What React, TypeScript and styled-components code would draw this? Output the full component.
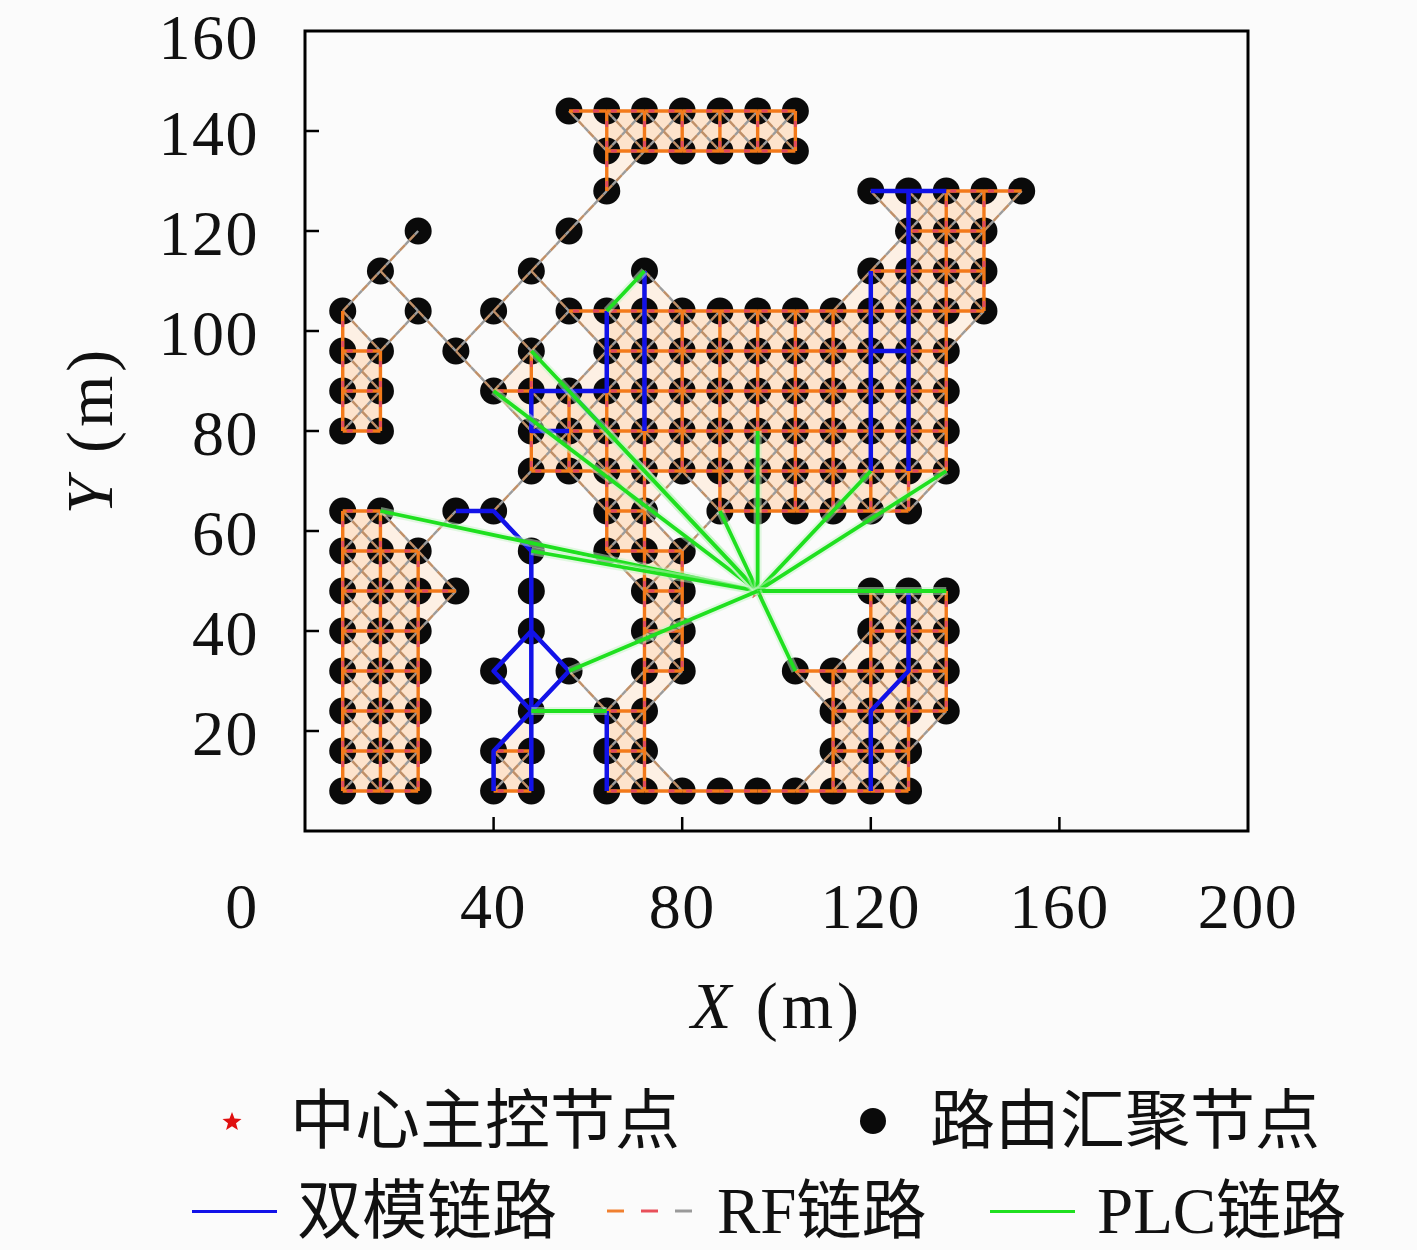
import React from "react";
import styled, { createGlobalStyle } from "styled-components";

const GlobalStyle = createGlobalStyle`
  html, body {
    margin: 0;
    padding: 0;
    background: #fbfbfb;
    overflow: hidden;
  }
`;

// plot box in page pixels
const X0 = 305;
const X1 = 1248;
const Y0 = 831;
const Y1 = 31;
const sx = (x: number) => X0 + (x * (X1 - X0)) / 200;
const sy = (y: number) => Y0 - (y * (Y0 - Y1)) / 160;

const range = (a: number, b: number) =>
  Array.from({ length: b - a + 1 }, (_, k) => a + k);

// node grid: key j (y = 8j) -> list of i (x = 8i)
const ROWS: Record<number, number[]> = {
  18: range(7, 13),
  17: range(8, 13),
  16: [8, ...range(15, 19)],
  15: [3, 7, 16, 17, 18],
  14: [2, 6, 9, ...range(15, 18)],
  13: [1, 3, 5, ...range(7, 18)],
  12: [1, 2, 4, 6, ...range(8, 17)],
  11: [1, 2, ...range(5, 17)],
  10: [1, 2, ...range(6, 17)],
  9: range(6, 17),
  8: [1, 2, 4, 5, 8, 9, ...range(11, 16)],
  7: [1, 2, 3, 6, 8, 9, 10],
  6: [1, 2, 3, 4, 6, 9, 10, 15, 16, 17],
  5: [1, 2, 3, 6, 9, 10, 15, 16, 17],
  4: [1, 2, 3, 5, 7, 9, 10, ...range(13, 17)],
  3: [1, 2, 3, 6, 8, 9, ...range(14, 17)],
  2: [1, 2, 3, 5, 6, 8, 9, 14, 15, 16],
  1: [1, 2, 3, 5, 6, ...range(8, 16)],
};

type Pt = [number, number];

const NODES: Pt[] = [];
Object.entries(ROWS).forEach(([j, list]) =>
  list.forEach((i) => NODES.push([i, Number(j)]))
);
const has = new Set(NODES.map(([i, j]) => `${i},${j}`));
const on = (i: number, j: number) => has.has(`${i},${j}`);

const ORTHO: [Pt, Pt][] = [];
const DIAG: [Pt, Pt][] = [];
const CELLS: { pts: Pt[]; full: boolean }[] = [];
NODES.forEach(([i, j]) => {
  if (on(i + 1, j)) ORTHO.push([[i, j], [i + 1, j]]);
  if (on(i, j + 1)) ORTHO.push([[i, j], [i, j + 1]]);
  if (on(i + 1, j + 1)) DIAG.push([[i, j], [i + 1, j + 1]]);
  if (on(i + 1, j - 1)) DIAG.push([[i, j], [i + 1, j - 1]]);
});
for (let i = 0; i < 20; i++) {
  for (let j = 0; j < 19; j++) {
    const c: Pt[] = ([[i, j], [i + 1, j], [i + 1, j + 1], [i, j + 1]] as Pt[]).filter(
      ([a, b]) => on(a, b)
    );
    if (c.length >= 3) CELLS.push({ pts: c, full: c.length === 4 });
  }
}

// metres
const BLUE: Pt[][] = [
  [[32, 64], [40, 64], [48, 56], [48, 24], [56, 32], [48, 40], [40, 32], [48, 24], [40, 16], [40, 8]],
  [[48, 24], [48, 8]],
  [[64, 24], [64, 8]],
  [[72, 112], [72, 80]],
  [[64, 104], [64, 88], [48, 88], [48, 80], [56, 80]],
  [[56, 88], [64, 80]],
  [[120, 128], [136, 128]],
  [[128, 128], [128, 72]],
  [[120, 112], [120, 72]],
  [[120, 96], [128, 96]],
  [[128, 48], [128, 32], [120, 24], [120, 8]],
];

const HUB: Pt = [96, 48];
const PLC: [Pt, Pt][] = [
  ...([
    [16, 64], [48, 56], [40, 88], [48, 96], [64, 80], [72, 72], [88, 64],
    [96, 80], [120, 72], [136, 72], [136, 48], [104, 32], [56, 32],
  ] as Pt[]).map((t): [Pt, Pt] => [HUB, t]),
  [[48, 24], [64, 24]],
  [[64, 104], [72, 112]],
];

const starPath = (cx: number, cy: number, r: number) => {
  const pts: string[] = [];
  for (let k = 0; k < 10; k++) {
    const rr = k % 2 === 0 ? r : r * 0.42;
    const a = -Math.PI / 2 + (k * Math.PI) / 5;
    pts.push(`${(cx + rr * Math.cos(a)).toFixed(1)},${(cy + rr * Math.sin(a)).toFixed(1)}`);
  }
  return `M${pts.join("L")}Z`;
};

const g = (i: number) => sx(i * 8);
const h = (j: number) => sy(j * 8);

const Figure = styled.div`
  width: 1417px;
  height: 1250px;
  display: flex;
  flex-direction: column;
  background: #fbfbfb;
  overflow: hidden;
`;

const ChartSvg = styled.svg`
  display: block;
  flex: none;
`;

const TickLabel = styled.text`
  font-family: "Liberation Serif", "DejaVu Serif", serif;
  font-size: 64px;
  letter-spacing: 1.5px;
  fill: #111;
`;

const AxisTitle = styled.text`
  font-family: "Liberation Serif", "DejaVu Serif", serif;
  font-size: 66px;
  letter-spacing: 4px;
  fill: #111;
`;

const Legend = styled.div`
  display: flex;
  flex-direction: column;
`;

const LegendRow = styled.div<{ $pad: number }>`
  display: flex;
  align-items: center;
  height: 90px;
  padding-left: ${({ $pad }) => $pad}px;
`;

const LegendItem = styled.div<{ $w?: number; $gap: number }>`
  display: flex;
  align-items: center;
  gap: ${({ $gap }) => $gap}px;
  width: ${({ $w }) => ($w ? `${$w}px` : "auto")};
  flex: none;
`;

const LegendLabel = styled.span`
  font-family: "Liberation Serif", "Noto Sans CJK SC", serif;
  font-size: 65px;
  line-height: 1;
  color: #111;
  white-space: nowrap;
`;

const Dot = styled.span`
  width: 26px;
  height: 26px;
  border-radius: 50%;
  background: #0a0a0a;
  flex: none;
`;

const LineSwatch = styled.span<{ $color: string }>`
  width: 85px;
  height: 3px;
  background: ${({ $color }) => $color};
  flex: none;
`;

const Swatch = styled.svg`
  display: block;
  flex: none;
`;

const RFLine = ({ a, b, diag }: { a: Pt; b: Pt; diag: boolean }) => {
  const p = { x1: g(a[0]), y1: h(a[1]), x2: g(b[0]), y2: h(b[1]) };
  if (diag) {
    return (
      <g>
        <line {...p} stroke="#c09068" strokeWidth={2.4} strokeDasharray="8 6" />
        <line {...p} stroke="#9c9c9c" strokeWidth={2.4} strokeDasharray="6 8" strokeDashoffset={-8} />
      </g>
    );
  }
  return (
    <g>
      <line {...p} stroke="#f37a1a" strokeWidth={3.4} />
      <line {...p} stroke="#e0485e" strokeWidth={2.8} strokeDasharray="6 14" strokeDashoffset={-4} />
    </g>
  );
};

const Chart = () => (
  <ChartSvg width={1417} height={1076} viewBox="0 0 1417 1076">
    {CELLS.map((c, k) => (
      <polygon
        key={`c${k}`}
        points={c.pts.map(([i, j]) => `${g(i)},${h(j)}`).join(" ")}
        fill={c.full ? "#fde3cc" : "#fdf0e4"}
      />
    ))}
    {NODES.map(([i, j]) => (
      <circle key={`n${i}-${j}`} cx={g(i)} cy={h(j)} r={13.5} fill="#0a0a0a" />
    ))}
    {DIAG.map(([a, b], k) => (
      <RFLine key={`d${k}`} a={a} b={b} diag />
    ))}
    {ORTHO.map(([a, b], k) => (
      <RFLine key={`o${k}`} a={a} b={b} diag={false} />
    ))}
    {BLUE.map((path, k) => (
      <polyline
        key={`b${k}`}
        points={path.map(([x, y]) => `${sx(x)},${sy(y)}`).join(" ")}
        fill="none"
        stroke="#1212e8"
        strokeWidth={4.5}
        strokeLinejoin="round"
      />
    ))}
    <path d={starPath(sx(HUB[0]), sy(HUB[1]), 9)} fill="#e01010" />
    {PLC.map(([a, b], k) => (
      <g key={`p${k}`}>
        <line x1={sx(a[0])} y1={sy(a[1])} x2={sx(b[0])} y2={sy(b[1])} stroke="#c6f5c6" strokeWidth={8} opacity={0.5} />
        <line x1={sx(a[0])} y1={sy(a[1])} x2={sx(b[0])} y2={sy(b[1])} stroke="#1fe01f" strokeWidth={3.8} />
      </g>
    ))}
    <rect x={X0} y={Y1} width={X1 - X0} height={Y0 - Y1} fill="none" stroke="#000" strokeWidth={3} />
    {[20, 40, 60, 80, 100, 120, 140].map((v) => (
      <line key={`yt${v}`} x1={X0} x2={X0 + 14} y1={sy(v)} y2={sy(v)} stroke="#000" strokeWidth={2.5} />
    ))}
    {[40, 80, 120, 160].map((v) => (
      <line key={`xt${v}`} x1={sx(v)} x2={sx(v)} y1={Y0} y2={Y0 - 14} stroke="#000" strokeWidth={2.5} />
    ))}
    {[20, 40, 60, 80, 100, 120, 140, 160].map((v) => (
      <TickLabel key={`yl${v}`} x={259} y={Math.max(sy(v) + 24, 59)} textAnchor="end">
        {v}
      </TickLabel>
    ))}
    {[0, 40, 80, 120, 160, 200].map((v) => (
      <TickLabel key={`xl${v}`} x={v === 0 ? 242 : sx(v)} y={928} textAnchor="middle">
        {v}
      </TickLabel>
    ))}
    <AxisTitle x={777} y={1028} textAnchor="middle">
      <tspan fontStyle="italic">X</tspan> (m)
    </AxisTitle>
    <AxisTitle transform="translate(112,430) rotate(-90)" textAnchor="middle">
      <tspan fontStyle="italic">Y</tspan> (m)
    </AxisTitle>
  </ChartSvg>
);

const App = () => (
  <Figure>
    <GlobalStyle />
    <Chart />
    <Legend>
      <LegendRow $pad={220}>
        <LegendItem $w={640} $gap={46}>
          <Swatch width={24} height={24} viewBox="0 0 24 24">
            <path d={starPath(12, 13, 10)} fill="#e01010" />
          </Swatch>
          <LegendLabel>中心主控节点</LegendLabel>
        </LegendItem>
        <LegendItem $gap={44}>
          <Dot />
          <LegendLabel>路由汇聚节点</LegendLabel>
        </LegendItem>
      </LegendRow>
      <LegendRow $pad={192}>
        <LegendItem $w={415} $gap={20}>
          <LineSwatch $color="#1212e8" />
          <LegendLabel>双模链路</LegendLabel>
        </LegendItem>
        <LegendItem $w={383} $gap={25}>
          <Swatch width={85} height={6} viewBox="0 0 85 6">
            <line x1={0} x2={17} y1={3} y2={3} stroke="#f08030" strokeWidth={3} />
            <line x1={34} x2={51} y1={3} y2={3} stroke="#e8505a" strokeWidth={3} />
            <line x1={68} x2={85} y1={3} y2={3} stroke="#9a9a9a" strokeWidth={3} />
          </Swatch>
          <LegendLabel>RF链路</LegendLabel>
        </LegendItem>
        <LegendItem $gap={22}>
          <LineSwatch $color="#1fe01f" />
          <LegendLabel>PLC链路</LegendLabel>
        </LegendItem>
      </LegendRow>
    </Legend>
  </Figure>
);

export default App;
